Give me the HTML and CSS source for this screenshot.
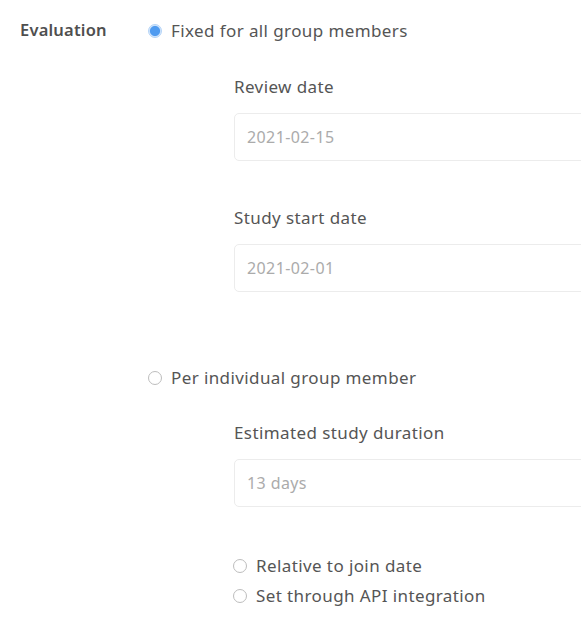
FILE: index.html
```html
<!DOCTYPE html>
<html>
<head>
<meta charset="utf-8">
<link rel="stylesheet" href="styles.css">
</head>
<body>
<div class="page">
  <div class="field-row">
    <div class="field-label">Evaluation</div>
    <div class="options">
      <label class="radio-line"><span class="radio checked"></span><span class="radio-text">Fixed for all group members</span></label>
      <div class="sub">
        <div class="sub-label">Review date</div>
        <div class="input">2021-02-15</div>
        <div class="sub-label gap-big">Study start date</div>
        <div class="input">2021-02-01</div>
      </div>
      <label class="radio-line second"><span class="radio"></span><span class="radio-text">Per individual group member</span></label>
      <div class="sub">
        <div class="sub-label first-small">Estimated study duration</div>
        <div class="input">13 days</div>
        <div class="sub-radios">
          <label class="radio-line small"><span class="radio"></span><span class="radio-text">Relative to join date</span></label>
          <label class="radio-line small"><span class="radio"></span><span class="radio-text">Set through API integration</span></label>
        </div>
      </div>
    </div>
  </div>
</div>
</body>
</html>
```

FILE: styles.css
```css
html, body {
  margin: 0;
  padding: 0;
  background: #ffffff;
  overflow: hidden;
}
body {
  font-family: "Noto Sans", "Open Sans", sans-serif;
  font-size: 17px;
  letter-spacing: 0.4px;
  color: #555555;
}
.page {
  padding: 19px 0 0 20px;
}
.field-row {
  display: flex;
}
.field-label {
  width: 129px;
  flex: none;
  font-size: 16.5px;
  letter-spacing: 0.2px;
  font-weight: 600;
  line-height: 22px;
  color: #4f4f4f;
}
.options {
  display: flex;
  flex-direction: column;
  align-items: flex-start;
}
.radio-line {
  display: flex;
  align-items: center;
  line-height: 24px;
  height: 24px;
}
.radio {
  width: 12px;
  height: 12px;
  border: 1px solid #bdbdbd;
  border-radius: 50%;
  background: #fff;
  margin-right: 9px;
  margin-left: -1px;
  flex: none;
  box-sizing: content-box;
}
.radio.checked {
  border: 1px solid #b3d3f7;
  background: radial-gradient(circle, #4f9bf0 0 4.6px, #d6e8fc 5.6px);
}
.sub {
  margin-left: 85px;
  display: flex;
  flex-direction: column;
}
.sub-label {
  margin-top: 32px;
  line-height: 24px;
}
.sub-label.gap-big {
  margin-top: 45px;
}
.sub-label.first-small {
  margin-top: 31px;
}
.input {
  margin-top: 14px;
  width: 420px;
  height: 48px;
  box-sizing: border-box;
  border: 1px solid #ececec;
  border-radius: 5px;
  padding: 0 12px;
  display: flex;
  align-items: center;
  color: #ababab;
  font-size: 16px;
}
.second {
  margin-top: 74px;
}
.sub-radios {
  margin-top: 47px;
  display: flex;
  flex-direction: column;
  gap: 6px;
}
```
